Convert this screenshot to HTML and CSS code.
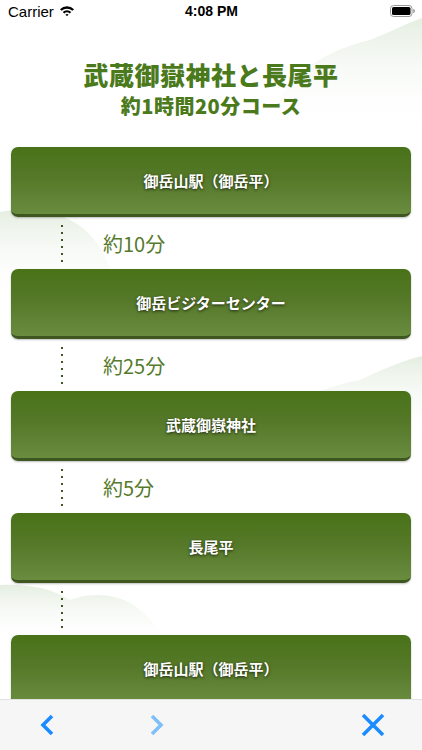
FILE: index.html
```html
<!DOCTYPE html>
<html lang="ja">
<head>
    <meta charset="UTF-8">
    <title>武蔵御嶽神社と長尾平</title>
    <link rel="stylesheet" href="styles.css">
</head>
<body>
<div class="screen">
    <!--背景の雲-->
    <svg class="clouds" width="422" height="750" viewBox="0 0 422 750">
        <defs>
            <linearGradient id="fade" x1="0" y1="0" x2="0" y2="1">
                <stop offset="0" stop-color="#e5eee1"/>
                <stop offset="1" stop-color="#ffffff" stop-opacity="0"/>
            </linearGradient>
        </defs>
        <path d="M268 125 C285 70 330 50 370 40 C395 30 410 22 422 18 L422 130 Z" fill="url(#fade)"/>
        <path d="M0 212 C30 205 70 212 90 235 C105 250 112 270 118 300 L0 300 Z" fill="url(#fade)"/>
        <path d="M255 430 C290 400 330 385 360 380 C385 368 405 360 422 356 L422 440 Z" fill="url(#fade)"/>
        <path d="M0 585 C30 583 55 590 70 600 C90 592 120 592 140 610 C155 622 163 635 168 645 L0 645 Z" fill="url(#fade)"/>
    </svg>

    <div class="status">
        <div class="carrier">Carrier
            <svg width="16" height="12" viewBox="0 0 16 12">
                <path d="M1 4.2 A10 10 0 0 1 15 4.2 L13.4 5.8 A7.8 7.8 0 0 0 2.6 5.8 Z" fill="#000"/>
                <path d="M3.7 6.9 A6.2 6.2 0 0 1 12.3 6.9 L10.7 8.5 A4 4 0 0 0 5.3 8.5 Z" fill="#000"/>
                <path d="M6.4 9.6 A2.4 2.4 0 0 1 9.6 9.6 L8 11.2 Z" fill="#000"/>
            </svg>
        </div>
        <div class="time">4:08 PM</div>
        <div class="battery">
            <svg width="25" height="12" viewBox="0 0 25 12">
                <rect x="0.5" y="0.5" width="21.5" height="11" rx="3" fill="none" stroke="#999" stroke-width="1"/>
                <rect x="2" y="2" width="18.5" height="8" rx="1.6" fill="#000"/>
                <path d="M23.2 4 a1.8 2 0 0 1 0 4 Z" fill="#999"/>
            </svg>
        </div>
    </div>

    <div class="content">
        <div class="heading">
            <h1>武蔵御嶽神社と長尾平</h1>
            <h2>約1時間20分コース</h2>
        </div>

        <div class="route">
            <div class="stop">御岳山駅（御岳平）</div>
            <div class="leg"><span class="dots"></span><span class="mins">約10分</span></div>
            <div class="stop">御岳ビジターセンター</div>
            <div class="leg"><span class="dots"></span><span class="mins">約25分</span></div>
            <div class="stop">武蔵御嶽神社</div>
            <div class="leg"><span class="dots"></span><span class="mins">約5分</span></div>
            <div class="stop">長尾平</div>
            <div class="leg"><span class="dots"></span><span class="mins"></span></div>
            <div class="stop">御岳山駅（御岳平）</div>
        </div>
    </div>

    <div class="toolbar">
        <svg class="tool back" width="20" height="24" viewBox="0 0 20 24">
            <path d="M14 3 L5 12 L14 21" fill="none" stroke="#1a8cff" stroke-width="3.6" stroke-linejoin="miter"/>
        </svg>
        <svg class="tool next" width="20" height="24" viewBox="0 0 20 24">
            <path d="M6 3 L15 12 L6 21" fill="none" stroke="#80c0f8" stroke-width="3.6" stroke-linejoin="miter"/>
        </svg>
        <span class="spacer"></span>
        <svg class="tool close" width="26" height="26" viewBox="0 0 26 26">
            <path d="M3 3 L23 23 M23 3 L3 23" fill="none" stroke="#1a8cff" stroke-width="3.6"/>
        </svg>
    </div>
</div>
</body>
</html>
```

FILE: styles.css
```css
*{
    margin: 0px;
    padding: 0px;
    box-sizing: border-box;
}
body
{
    background: #ffffff;
    font-family: "Noto Sans CJK JP", "Liberation Sans", sans-serif;
}
.screen
{
    width: 422px;
    height: 750px;
    position: relative;
    overflow: hidden;
    display: flex;
    flex-direction: column;
}
.clouds
{
    position: absolute;
    left: 0px;
    top: 0px;
}
.status
{
    position: relative;
    height: 22px;
    display: flex;
    align-items: center;
    justify-content: space-between;
    padding: 0px 7px 0px 8px;
    font-family: "Liberation Sans", Arial, sans-serif;
    font-size: 15px;
    color: #000000;
}
.carrier
{
    display: flex;
    align-items: center;
    gap: 5px;
    width: 100px;
}
.time
{
    font-weight: bold;
    font-size: 14px;
}
.battery
{
    width: 100px;
    display: flex;
    justify-content: flex-end;
}
.content
{
    position: relative;
    flex: 1;
    overflow: hidden;
    padding-top: 37px;
}
.heading
{
    text-align: center;
    color: #4b7a1c;
}
.heading h1
{
    font-size: 25px;
    line-height: 30px;
    font-weight: 900;
    letter-spacing: 0.5px;
}
.heading h2
{
    margin-top: 4px;
    font-size: 20px;
    line-height: 26px;
    font-weight: 900;
    letter-spacing: 0.5px;
}
.route
{
    margin-top: 28px;
    padding: 0px 11px;
    display: flex;
    flex-direction: column;
}
.stop
{
    height: 70px;
    border-radius: 7px;
    background: linear-gradient(to bottom, #497218 0%, #56792a 50%, #6a8c3f 100%);
    border-bottom: 3px solid #3e5620;
    box-shadow: 0px 1px 2px rgba(0, 0, 0, 0.25);
    display: flex;
    align-items: center;
    justify-content: center;
    color: #ffffff;
    font-size: 15px;
    font-weight: bold;
    text-shadow: 0px 1px 3px rgba(0, 0, 0, 0.7);
    padding-bottom: 1px;
}
.leg
{
    height: 52px;
    display: flex;
    align-items: center;
}
.dots
{
    width: 2px;
    height: 37px;
    margin-left: 50px;
    background: repeating-linear-gradient(to bottom, #3d5524 0px, #3d5524 2px, transparent 2px, transparent 7px);
}
.mins
{
    margin-left: 40px;
    font-size: 20px;
    font-weight: 400;
    color: #567a2c;
    padding-top: 1px;
}
.toolbar
{
    position: relative;
    height: 51px;
    flex-shrink: 0;
    background: #f7f6f7;
    border-top: 1px solid #e2e2e2;
    display: flex;
    align-items: center;
    padding: 0px 36px 0px 38px;
}
.tool
{
    display: block;
}
.next
{
    margin-left: 88px;
}
.spacer
{
    flex: 1;
}
```
